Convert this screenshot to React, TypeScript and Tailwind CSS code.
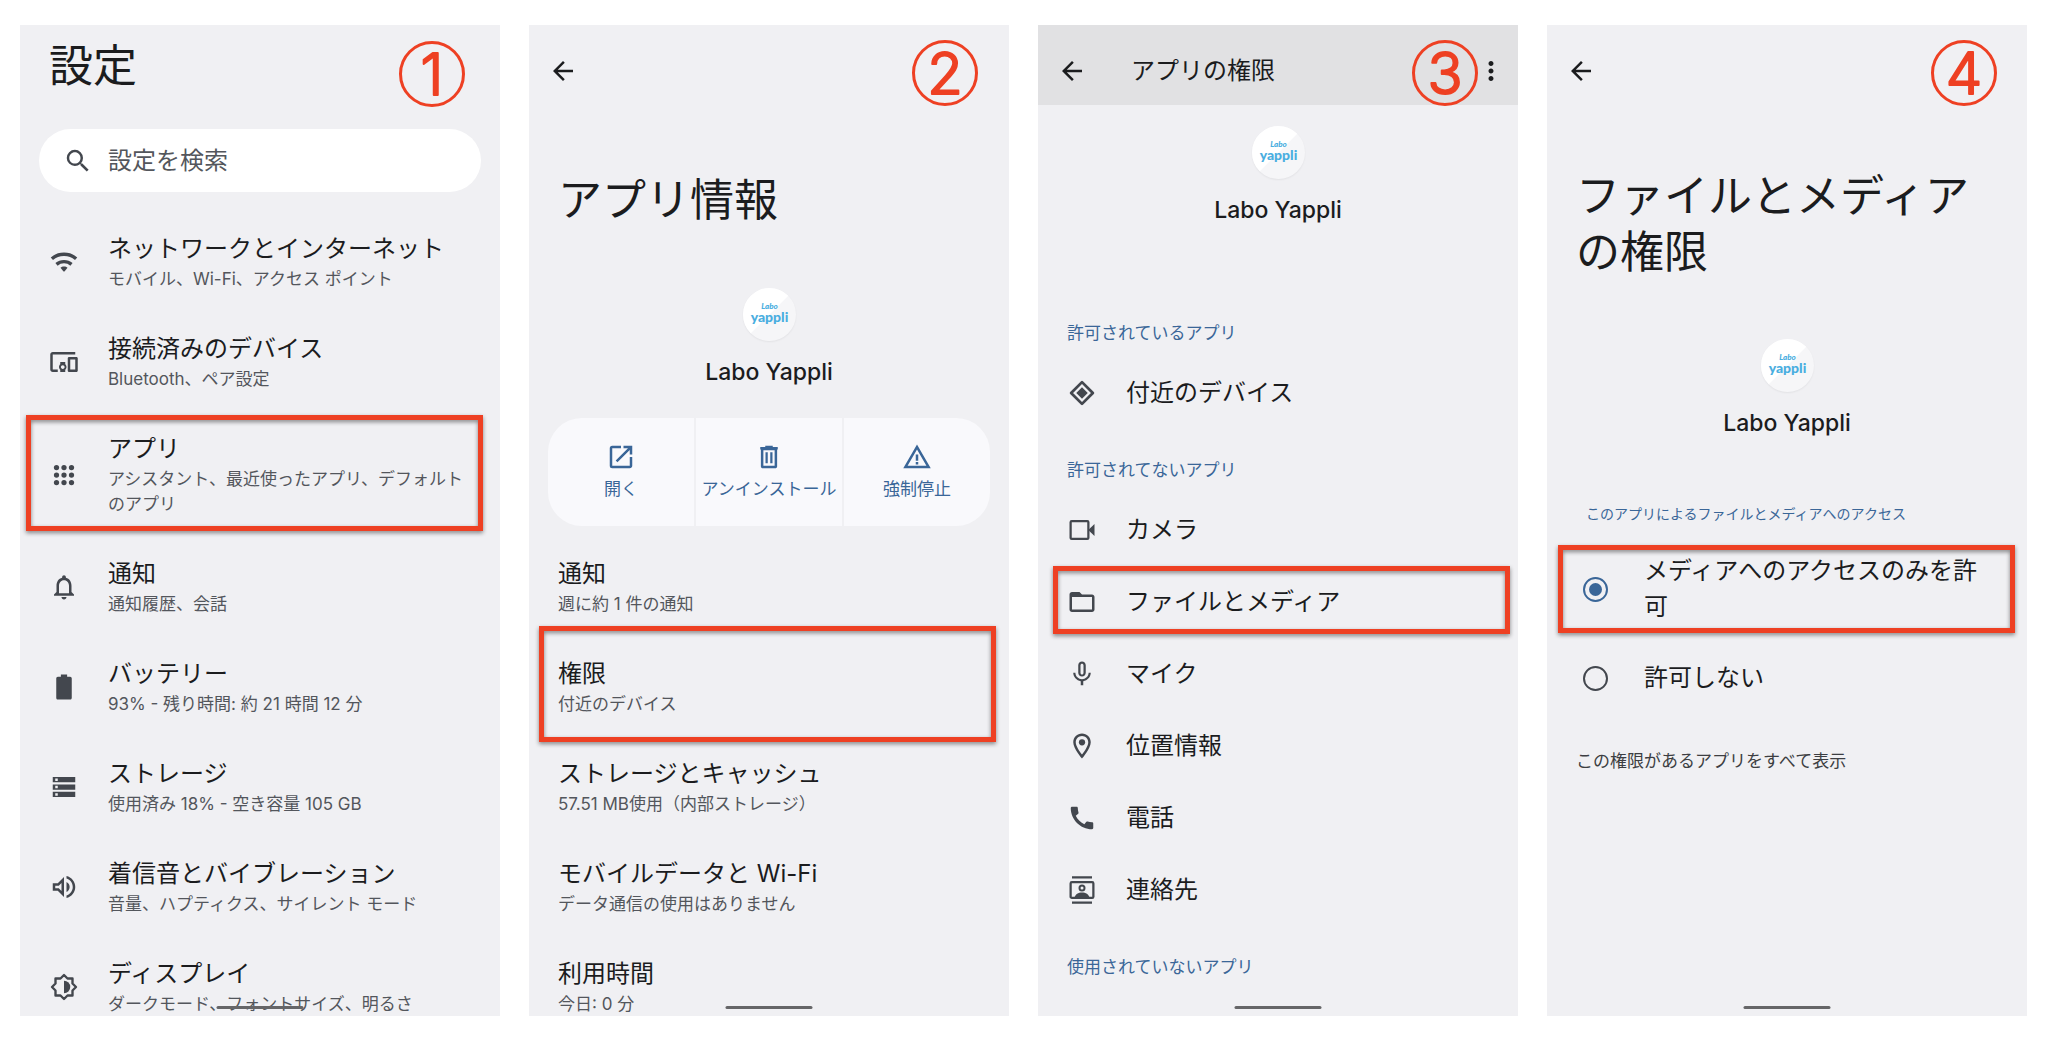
import type { ReactNode } from "react";
import {
  MdArrowBack,
  MdCall,
  MdDevicesOther,
  MdFolderOpen,
  MdMicNone,
  MdMoreVert,
  MdNotificationsNone,
  MdOpenInNew,
  MdOutlineLocationOn,
  MdOutlineVolumeUp,
  MdSearch,
  MdWarningAmber,
} from "react-icons/md";

type Children = { children: ReactNode };

const Icon = ({ children }: Children) => (
  <svg viewBox="0 0 24 24" className="size-[30px]" fill="currentColor" aria-hidden="true">
    {children}
  </svg>
);

const WifiIcon = () => (
  <Icon>
    <g fill="none" stroke="currentColor" strokeWidth="2.7">
      <path d="M2.3 9.4c5.4-4.800 14-4.800 19.4 0" />
      <path d="M6 13.900c3.4-2.900 8.6-2.900 12 0" />
    </g>
    <path d="M12 15.6c1.100 0 2.100.4 2.800 1L12.700 19.200a.9.9 0 0 1-1.400 0L9.200 16.600c.700-.6 1.700-1 2.800-1z" />
  </Icon>
);

const AppsIcon = () => (
  <Icon>
    {[6, 12, 18].map((y) =>
      [6, 12, 18].map((x) => <circle key={`${x}-${y}`} cx={x} cy={y} r="2.1" />)
    )}
  </Icon>
);

const BatteryIcon = () => (
  <Icon>
    <path d="M9.5 2h5v1.8h2.4c.7 0 1.3.6 1.3 1.3v15.6c0 .7-.6 1.3-1.3 1.3H7.1c-.7 0-1.3-.6-1.3-1.3V5.1c0-.7.6-1.3 1.3-1.3h2.4z" />
  </Icon>
);

const StorageIcon = () => (
  <Icon>
    <path
      fillRule="evenodd"
      d="M3 4h18v4.2H3zM5 5.1v2h2v-2zM3 9.9h18v4.2H3zM5 11v2h2v-2zM3 15.8h18V20H3zM5 16.9v2h2v-2z"
    />
  </Icon>
);

const BrightnessIcon = () => (
  <Icon>
    <path
      fill="none"
      stroke="currentColor"
      strokeWidth="1.9"
      strokeLinejoin="round"
      d="M12 2.4l2.8 2.8h4v4l2.8 2.8-2.8 2.8v4h-4L12 21.6l-2.8-2.8h-4v-4L2.4 12l2.8-2.8v-4h4z"
    />
    <path d="M12 7a5 5 0 0 1 0 10z" />
  </Icon>
);

const TrashIcon = () => (
  <Icon>
    <path d="M9 3h6v1h4v2H5V4h4z" />
    <path
      fillRule="evenodd"
      d="M5.5 5h13v14.5c0 .9-.7 1.5-1.5 1.5H7c-.8 0-1.5-.6-1.5-1.5zm2 1.5V19h9V6.5z"
    />
    <path d="M9.2 8.2H11V17H9.2zM13 8.2h1.800V17H13z" />
  </Icon>
);

const NearbyIcon = () => (
  <Icon>
    <path
      fill="none"
      stroke="currentColor"
      strokeWidth="2.200"
      strokeLinejoin="round"
      d="M12 3.3l8.7 8.7-8.7 8.7L3.3 12z"
    />
    <path d="M12 7.4l4.600 4.600-4.600 4.600L7.400 12z" />
  </Icon>
);

const CameraIcon = () => (
  <Icon>
    <rect x="2.9" y="4.900" width="14.2" height="14.2" rx="0.8" fill="none" stroke="currentColor" strokeWidth="1.8" />
    <path d="M17 12l5-4.8v9.6z" />
  </Icon>
);

const ContactsIcon = () => (
  <Icon>
    <path d="M4 1h16v1.8H4zM4 21.200h16V23H4z" />
    <rect x="2.9" y="5.7" width="18.2" height="12.6" rx="1" fill="none" stroke="currentColor" strokeWidth="1.8" />
    <circle cx="12" cy="10.3" r="2" fill="none" stroke="currentColor" strokeWidth="1.6" />
    <path d="M6 18c.6-2.500 3-4 6-4s5.400 1.500 6 4z" />
  </Icon>
);

const StepBadge = ({ step, className }: { step: number; className: string }) => (
  <svg
    viewBox="0 0 66 66"
    className={`absolute z-10 size-[66px] overflow-visible text-[#ee4023] ${className}`}
    role="img"
    aria-label={`手順 ${step}`}
  >
    <circle cx="33" cy="33" r="31.5" fill="none" stroke="currentColor" strokeWidth="3" />
    <text
      x="33"
      y="54"
      textAnchor="middle"
      fill="currentColor"
      stroke="currentColor"
      strokeWidth="2"
      strokeLinejoin="round"
      className="font-['Inter'] text-[58px] font-light"
    >
      {step}
    </text>
  </svg>
);

const Highlight = ({ className }: { className: string }) => (
  <span
    className={`pointer-events-none absolute border-[5px] border-[#ee4023] drop-shadow-[0_2px_2px_rgba(0,0,0,0.45)] ${className}`}
  />
);

const Screen = ({ children }: Children) => (
  <section className="relative flex min-w-0 flex-col overflow-hidden bg-[#f0f0f3]">
    {children}
    <span className="absolute bottom-[7px] left-1/2 h-[3px] w-[87px] -translate-x-1/2 rounded-full bg-[#666668]" />
  </section>
);

const BackButton = () => (
  <button type="button" aria-label="戻る" className="size-[30px] shrink-0">
    <MdArrowBack className="size-[30px]" />
  </button>
);

const AppLogo = ({ className }: { className: string }) => (
  <div className={`flex flex-col items-center ${className}`}>
    <svg
      viewBox="0 0 53 53"
      className="size-[53px] rounded-full bg-[#f6f6f8] shadow-[0_1px_2px_rgba(0,0,0,0.06)]"
      aria-hidden="true"
    >
      <path d="M0 0h53L0 53z" fill="#ffffff" />
      <g fill="#4aaee0" textAnchor="middle" className="font-['Lato']">
        <text x="26.5" y="21" className="text-[8px] font-black italic">
          Labo
        </text>
        <text x="26.5" y="34" className="text-[14px] font-black">
          yappli
        </text>
      </g>
    </svg>
    <p className="mt-[15px] text-[23px] leading-[32px] font-medium">Labo Yappli</p>
  </div>
);

type ItemProps = {
  title: string;
  detail: string;
  icon?: ReactNode;
  highlight?: string;
};

const SettingItem = ({ title, detail, icon, highlight }: ItemProps) => (
  <li className="relative">
    <a href="#" className="flex items-center gap-[29px] pr-[30px] pl-[29px]">
      {icon && <span className="shrink-0 text-[#43474e]">{icon}</span>}
      <span className="min-w-0">
        <span className="block text-[24px] leading-[34px]">{title}</span>
        <span className="mt-[1px] block text-[17px] leading-[25px] text-[#53565c]">{detail}</span>
      </span>
    </a>
    {highlight && <Highlight className={highlight} />}
  </li>
);

const settings: ItemProps[] = [
  { title: "ネットワークとインターネット", detail: "モバイル、Wi-Fi、アクセス ポイント", icon: <WifiIcon /> },
  { title: "接続済みのデバイス", detail: "Bluetooth、ペア設定", icon: <MdDevicesOther className="size-[30px]" /> },
  {
    title: "アプリ",
    detail: "アシスタント、最近使ったアプリ、デフォルトのアプリ",
    icon: <AppsIcon />,
    highlight: "-top-[17px] -bottom-[14px] left-[6px] right-[17px]",
  },
  { title: "通知", detail: "通知履歴、会話", icon: <MdNotificationsNone className="size-[30px]" /> },
  { title: "バッテリー", detail: "93% - 残り時間: 約 21 時間 12 分", icon: <BatteryIcon /> },
  { title: "ストレージ", detail: "使用済み 18% - 空き容量 105 GB", icon: <StorageIcon /> },
  {
    title: "着信音とバイブレーション",
    detail: "音量、ハプティクス、サイレント モード",
    icon: <MdOutlineVolumeUp className="size-[30px]" />,
  },
  { title: "ディスプレイ", detail: "ダークモード、フォントサイズ、明るさ", icon: <BrightnessIcon /> },
];

const appInfo: ItemProps[] = [
  { title: "通知", detail: "週に約 1 件の通知" },
  {
    title: "権限",
    detail: "付近のデバイス",
    highlight: "-top-[31px] -bottom-[25px] left-[10px] right-[13px]",
  },
  { title: "ストレージとキャッシュ", detail: "57.51 MB使用（内部ストレージ）" },
  { title: "モバイルデータと Wi-Fi", detail: "データ通信の使用はありません" },
  { title: "利用時間", detail: "今日: 0 分" },
];

const actions = [
  { label: "開く", icon: <MdOpenInNew className="size-[30px]" /> },
  { label: "アンインストール", icon: <TrashIcon /> },
  { label: "強制停止", icon: <MdWarningAmber className="size-[30px]" /> },
];

type Permission = { label: string; icon: ReactNode; highlight?: string };

const denied: Permission[] = [
  { label: "カメラ", icon: <CameraIcon /> },
  {
    label: "ファイルとメディア",
    icon: <MdFolderOpen className="size-[30px]" />,
    highlight: "top-0 bottom-[4px] left-[15px] right-[8px]",
  },
  { label: "マイク", icon: <MdMicNone className="size-[30px]" /> },
  { label: "位置情報", icon: <MdOutlineLocationOn className="size-[30px]" /> },
  { label: "電話", icon: <MdCall className="size-[30px]" /> },
  { label: "連絡先", icon: <ContactsIcon /> },
];

const PermissionItem = ({ label, icon, highlight }: Permission) => (
  <li className="relative">
    <a href="#" className="flex h-[72px] items-center gap-[29px] pl-[29px]">
      <span className="shrink-0 text-[#43474e]">{icon}</span>
      <span className="text-[24px] leading-[34px]">{label}</span>
    </a>
    {highlight && <Highlight className={highlight} />}
  </li>
);

const GroupLabel = ({ children }: Children) => (
  <h3 className="px-[29px] pt-[29px] pb-[11px] text-[17px] leading-[25px] text-[#3a6698]">{children}</h3>
);

const SettingsScreen = () => (
  <Screen>
    <StepBadge step={1} className="top-[16px] right-[35px]" />
    <h1 className="px-[29px] pt-[9px] text-[44px] leading-[64px]">設定</h1>
    <label className="mx-[19px] mt-[31px] flex h-[63px] items-center gap-[15px] rounded-full bg-white pl-[24px] text-[#43474e]">
      <MdSearch className="size-[30px] shrink-0" />
      <input
        type="search"
        aria-label="設定を検索"
        placeholder="設定を検索"
        className="min-w-0 flex-1 bg-transparent text-[24px] leading-[34px] outline-none placeholder:text-[#53565c]"
      />
    </label>
    <ul className="mt-[40px] -mb-[1px] flex flex-col gap-[40px]">
      {settings.map((item) => (
        <SettingItem key={item.title} {...item} />
      ))}
    </ul>
  </Screen>
);

const AppInfoScreen = () => (
  <Screen>
    <StepBadge step={2} className="top-[15px] right-[31px]" />
    <div className="flex pt-[31px] pl-[19px]">
      <BackButton />
    </div>
    <h2 className="mt-[86px] px-[29px] text-[44px] leading-[56px]">アプリ情報</h2>
    <AppLogo className="mt-[60px]" />
    <div className="mx-[19px] mt-[30px] grid grid-cols-3 gap-[2px] overflow-hidden rounded-[34px] text-[#3a6698]">
      {actions.map(({ label, icon }) => (
        <button
          key={label}
          type="button"
          className="flex h-[108px] flex-col items-center gap-[5px] bg-[#f9f9fc] pt-[24px] text-[17px] leading-[25px] whitespace-nowrap"
        >
          {icon}
          {label}
        </button>
      ))}
    </div>
    <ul className="mt-[31px] -mb-[1px] flex flex-col gap-[40px]">
      {appInfo.map((item) => (
        <SettingItem key={item.title} {...item} />
      ))}
    </ul>
  </Screen>
);

const PermissionsScreen = () => (
  <Screen>
    <StepBadge step={3} className="top-[15px] right-[40px]" />
    <header className="flex h-[80px] items-center bg-[#e1e1e3] pt-[11px] pr-[12px] pl-[19px]">
      <BackButton />
      <h2 className="ml-[44px] flex-1 text-[24px] leading-[34px]">アプリの権限</h2>
      <button type="button" aria-label="その他" className="size-[30px]">
        <MdMoreVert className="size-[30px]" />
      </button>
    </header>
    <AppLogo className="mt-[21px]" />
    <div className="mt-[66px]">
      <GroupLabel>許可されているアプリ</GroupLabel>
      <ul>
        <PermissionItem label="付近のデバイス" icon={<NearbyIcon />} />
      </ul>
      <GroupLabel>許可されてないアプリ</GroupLabel>
      <ul>
        {denied.map((item) => (
          <PermissionItem key={item.label} {...item} />
        ))}
      </ul>
      <GroupLabel>使用されていないアプリ</GroupLabel>
    </div>
  </Screen>
);

const radioClass =
  "grid size-[25px] shrink-0 appearance-none place-content-center rounded-full border-2 border-[#43474e] checked:border-[#3a6698] checked:before:size-[13px] checked:before:rounded-full checked:before:bg-[#3a6698] checked:before:content-['']";

const FilesAccessScreen = () => (
  <Screen>
    <StepBadge step={4} className="top-[15px] right-[30px]" />
    <div className="flex pt-[31px] pl-[19px]">
      <BackButton />
    </div>
    <h2 className="mt-[82px] px-[29px] text-[44px] leading-[56px]">ファイルとメディアの権限</h2>
    <AppLogo className="mt-[59px]" />
    <fieldset className="mt-[65px]">
      <legend className="px-[39px] text-[14px] leading-[20px] text-[#3a6698]">
        このアプリによるファイルとメディアへのアクセス
      </legend>
      <div className="relative mt-[29px]">
        <label className="flex items-center gap-[36px] pr-[30px] pl-[36px] text-[24px] leading-[36px]">
          <input type="radio" name="media" defaultChecked className={radioClass} />
          メディアへのアクセスのみを許可
        </label>
        <Highlight className="-inset-y-[8px] left-[11px] right-[12px]" />
      </div>
      <label className="mt-[35px] flex items-center gap-[36px] pr-[30px] pl-[36px] text-[24px] leading-[36px]">
        <input type="radio" name="media" className={radioClass} />
        許可しない
      </label>
    </fieldset>
    <a href="#" className="mt-[53px] px-[29px] text-[17px] leading-[25px] text-[#3c3e42]">
      この権限があるアプリをすべて表示
    </a>
  </Screen>
);

export default function App() {
  return (
    <main
      lang="ja"
      className="grid min-h-screen grid-cols-1 gap-[29px] bg-white pt-[25px] pr-[25px] pb-[26px] pl-[20px] font-['Inter','Noto_Sans_CJK_JP',sans-serif] text-[#1b1c1e] md:grid-cols-2 xl:grid-cols-4"
    >
      <SettingsScreen />
      <AppInfoScreen />
      <PermissionsScreen />
      <FilesAccessScreen />
    </main>
  );
}
